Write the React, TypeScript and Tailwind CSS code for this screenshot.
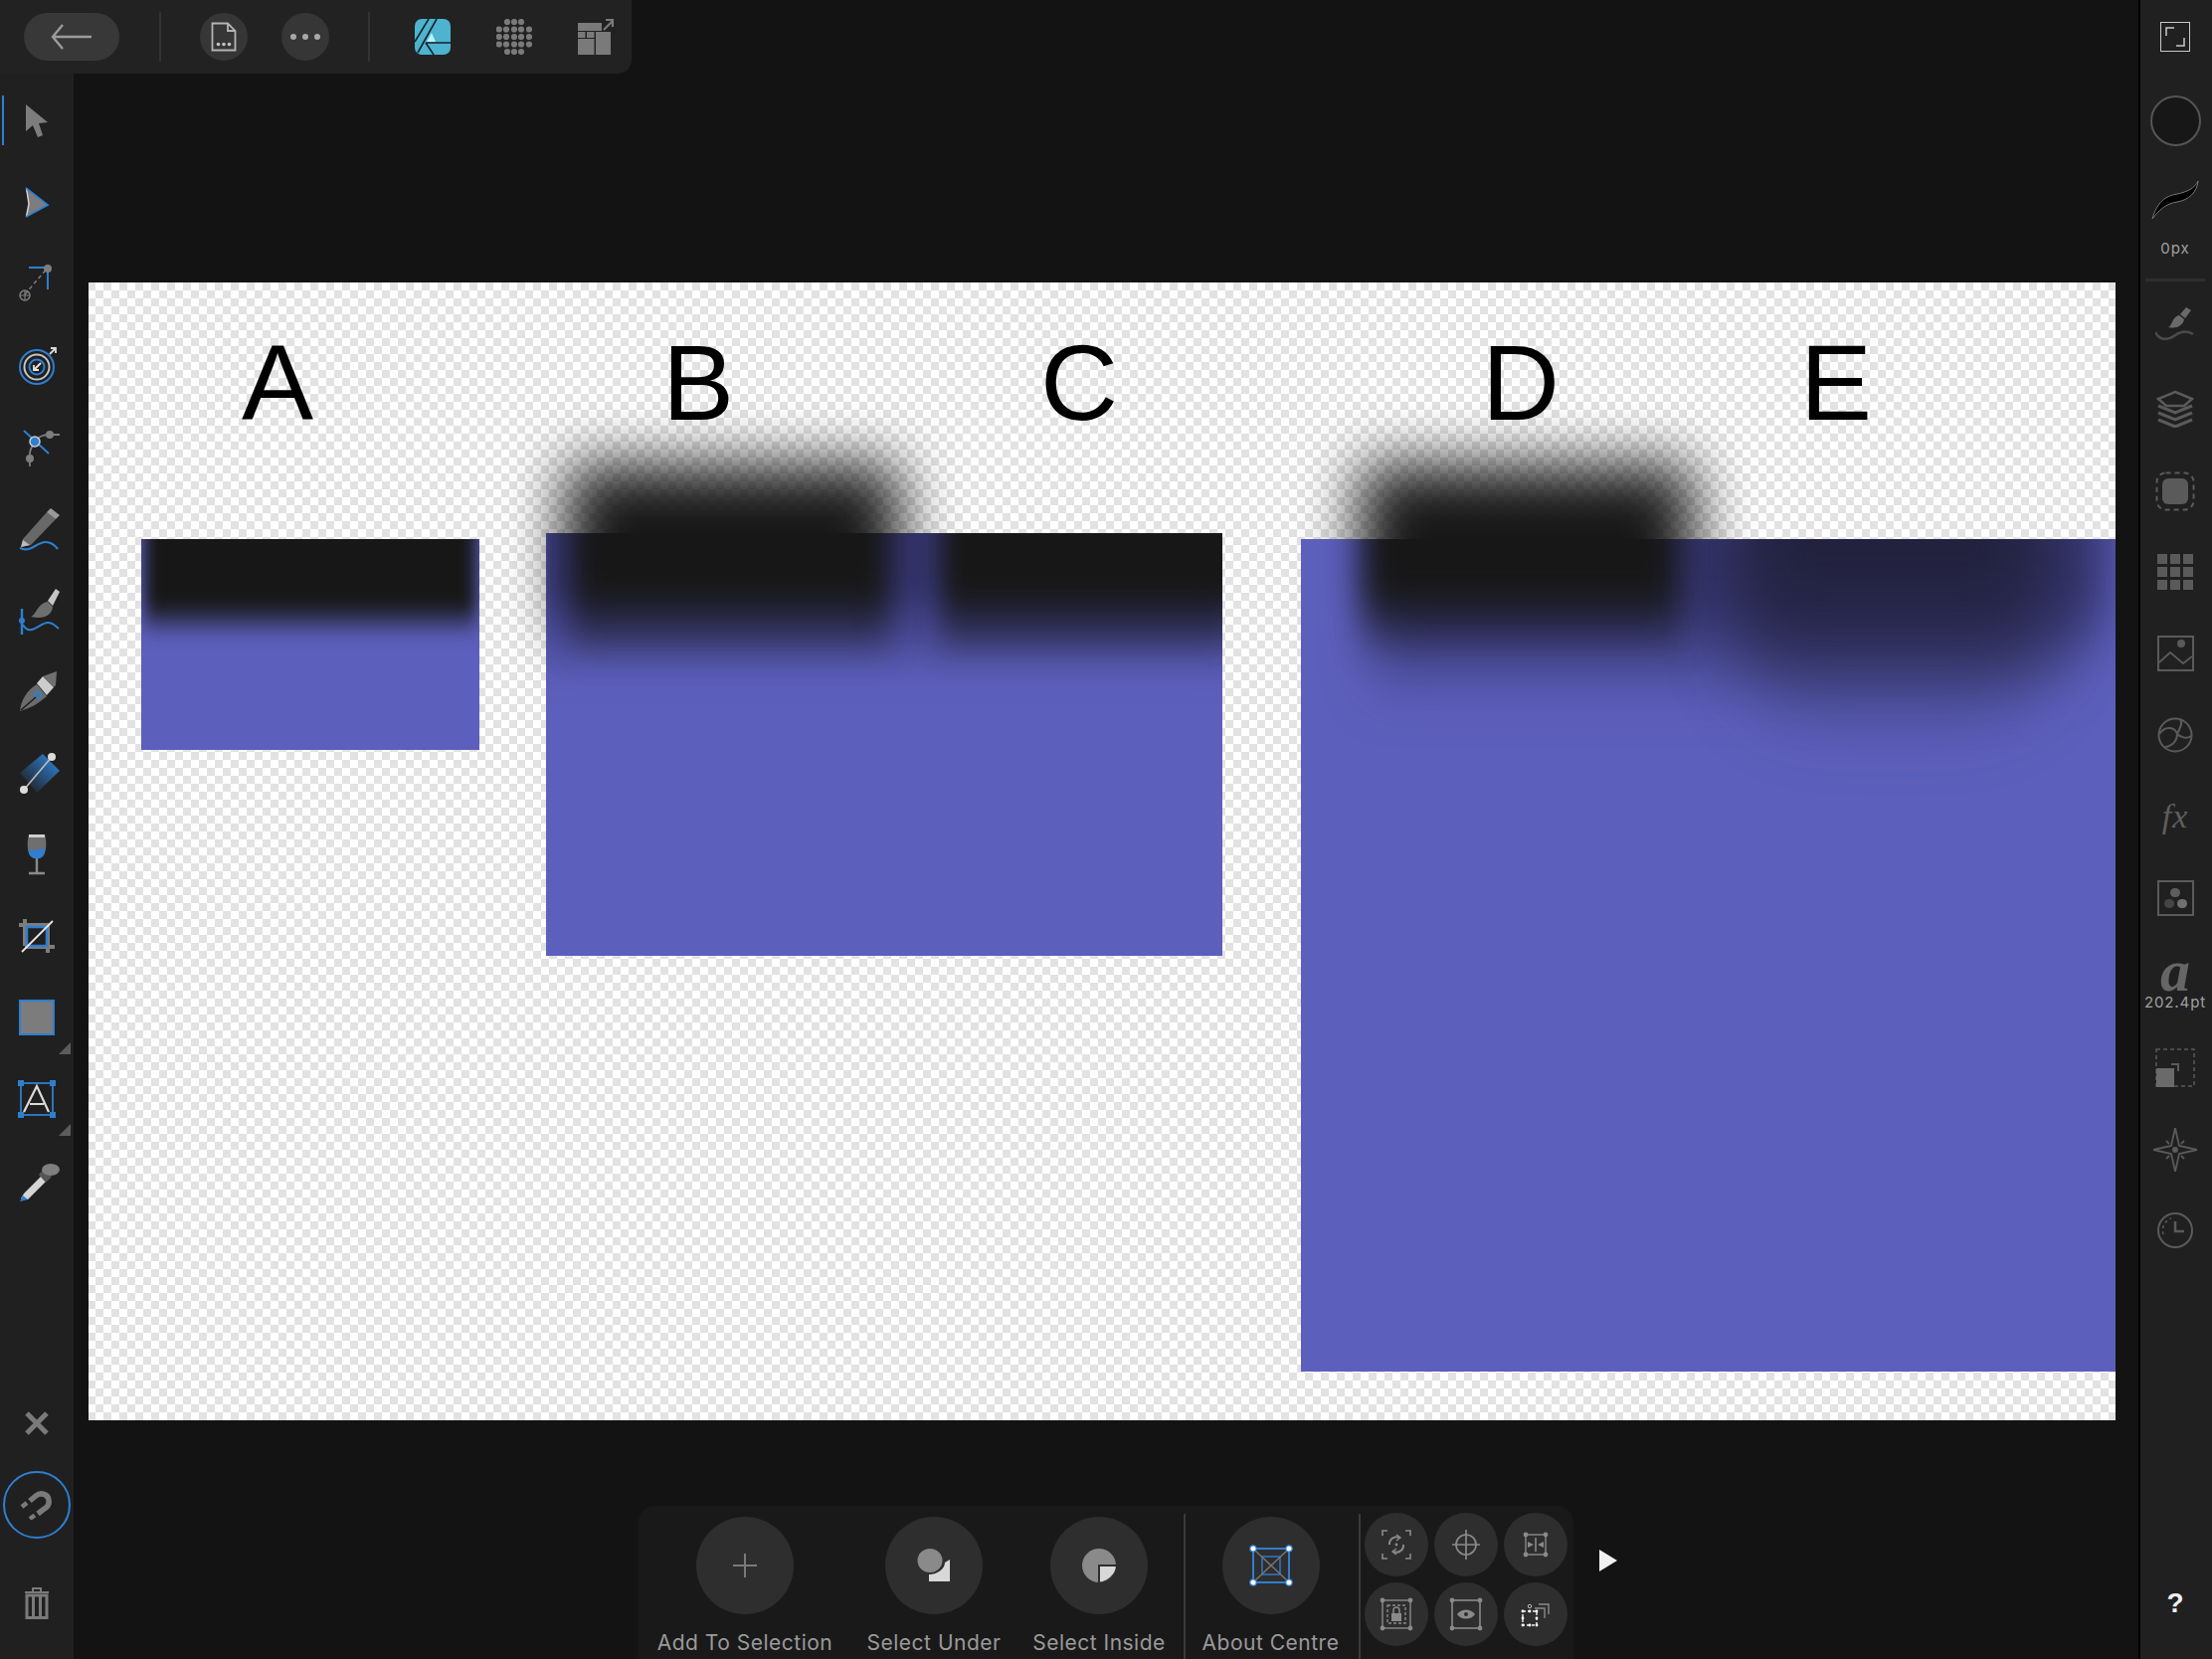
import type { ReactNode } from "react";

const grey = "#7d7d7d";
const blue = "#2f7ed0";
const rg = "#5a5a5a";
const sm = "#8a8a8a";

function Ico({ size = 54, children }: { size?: number; children: ReactNode }) {
  return (
    <svg width={size} height={size} viewBox="0 0 54 54" fill="none">
      {children}
    </svg>
  );
}

const leftTools: ReactNode[] = [
  <Ico key="move">
    <path d="M16 10 L16 37 L23 31 L28 43 L33 41 L29 29 L38 28 Z" fill={grey} />
  </Ico>,
  <Ico key="node">
    <path d="M16 12 L38 29 L16 41 L19 28 Z" fill={grey} />
    <path d="M16.5 12 L19 28 L16.5 41" stroke="#d0d0d0" strokeWidth="1.5" />
    <path d="M16 12 L38 29 L16 41" stroke={blue} strokeWidth="1.8" />
  </Ico>,
  <Ico key="contour">
    <path d="M19 10 H38 V32" stroke={blue} strokeWidth="2" />
    <path d="M15 37 L38 10" stroke={grey} strokeWidth="1.5" strokeDasharray="4 3" />
    <circle cx="38" cy="11" r="4" fill={grey} />
    <circle cx="15" cy="38" r="5" stroke={grey} strokeWidth="1.5" />
    <path d="M10 38 H20 M15 33 V43" stroke={grey} strokeWidth="1.2" />
  </Ico>,
  <Ico key="corner">
    <circle cx="27" cy="28" r="17" stroke={blue} strokeWidth="2" />
    <circle cx="27" cy="28" r="12.5" stroke="#c4c4c4" strokeWidth="2" />
    <circle cx="27" cy="28" r="7.5" stroke={blue} strokeWidth="2" />
    <path d="M24 31 L31 24 M24 26 V31 H29" stroke="#e6e6e6" strokeWidth="1.8" />
    <path d="M40 15 L46 9 M41 9 H46 V14" stroke="#d8d8d8" strokeWidth="1.8" />
  </Ico>,
  <Ico key="pen-node">
    <path d="M26 22 C28 14 36 14 45 14 H50 M26 22 C18 28 20 36 20 46" stroke={grey} strokeWidth="1.8" />
    <path d="M14 10 L39 33" stroke={blue} strokeWidth="2" />
    <circle cx="40" cy="14" r="4" fill={grey} />
    <circle cx="20" cy="38" r="4" fill={grey} />
    <circle cx="25" cy="21" r="5" fill={blue} stroke="#cfcfcf" strokeWidth="1.5" />
  </Ico>,
  <Ico key="pencil">
    <path d="M13 38 L37 11 L46 18 L21 44 L11 46 Z" fill="#686868" />
    <path d="M37 11 L41 7 L50 14 L46 18 Z" fill="#9a9a9a" />
    <path d="M11 46 L13 39 L20 44 Z" fill="#bbbbbb" />
    <path d="M10 47 C22 52 26 41 36 41 C42 41 45 44 48 48" stroke={blue} strokeWidth="2.2" />
  </Ico>,
  <Ico key="brush">
    <path d="M21 34 C26 33 28 20 38 19 L43 24 C42 33 34 37 21 34 Z" fill="#6e6e6e" />
    <path d="M38 18 L46 6 L50 9 L43 23 Z" fill="#c6c6c6" />
    <path d="M12 26 V52" stroke={blue} strokeWidth="2.4" />
    <circle cx="12" cy="38" r="3" fill={blue} />
    <path d="M13 42 C20 55 30 40 38 40 C44 40 46 44 49 46" stroke={blue} strokeWidth="2" />
  </Ico>,
  <Ico key="pen">
    <path d="M10 47 C11 36 17 26 27 20 L37 32 C28 40 20 44 10 47 Z" fill="#6c6c6c" />
    <path d="M27 19 L33 12 L44 23 L37 31 Z" fill="#cccccc" />
    <path d="M33 12 L47 7 L46 21 L44 23 Z" fill="#707070" />
    <circle cx="28" cy="31" r="3.2" stroke={blue} strokeWidth="2" />
    <path d="M11 46 L26 33" stroke="#1c1c1c" strokeWidth="1.5" />
  </Ico>,
  <Ico key="fill">
    <defs>
      <linearGradient id="fillg" x1="0.9" y1="0.1" x2="0.1" y2="0.9">
        <stop offset="0" stopColor="#2f7ed0" />
        <stop offset="1" stopColor="#2f7ed0" stopOpacity="0" />
      </linearGradient>
    </defs>
    <path d="M33 8 L50 25 L27 47 L10 27 Z" fill="url(#fillg)" />
    <path d="M14 44 L42 11" stroke="#bdbdbd" strokeWidth="1.6" />
    <circle cx="14" cy="44" r="4" fill="#dcdcdc" />
    <circle cx="42" cy="11" r="4" fill="#dcdcdc" />
  </Ico>,
  <Ico key="glass">
    <path d="M19 7 H35 C37 15 37 24 33 29 C30 32 24 32 21 29 C17 24 17 15 19 7 Z" fill="#6f6f6f" />
    <path d="M18.5 22 C23 25 30 20 35.5 22 C35 25 34 28 33 29 C30 32 24 32 21 29 C19 27 18.5 25 18.5 22 Z" fill={blue} />
    <path d="M19 7 H35 V10 H19 Z" fill="#cfcfcf" />
    <path d="M27 31 V45 M19 46 H35" stroke="#8a8a8a" strokeWidth="2.4" />
  </Ico>,
  <Ico key="crop">
    <path d="M9 16 H39 M15 10 V37 M38 16 V44 M15 38 H45" stroke={grey} strokeWidth="4" />
    <rect x="17" y="18" width="20" height="19" stroke={blue} strokeWidth="2.5" />
    <path d="M12 43 L43 12" stroke="#e8e8e8" strokeWidth="1.8" />
  </Ico>,
  <Ico key="rect">
    <rect x="10" y="10" width="34" height="34" fill="#7c7c7c" stroke={blue} strokeWidth="2" />
  </Ico>,
  <Ico key="text">
    <rect x="11" y="11" width="32" height="32" stroke={blue} strokeWidth="1.8" />
    <rect x="8" y="8" width="6" height="6" fill={blue} />
    <rect x="40" y="8" width="6" height="6" fill={blue} />
    <rect x="8" y="40" width="6" height="6" fill={blue} />
    <rect x="40" y="40" width="6" height="6" fill={blue} />
    <path d="M14 40 L27 14 L39 40 M20 32 H34" stroke="#dadada" strokeWidth="2.2" />
  </Ico>,
  <Ico key="picker">
    <path d="M11 45 L14 40 L32 22 L37 27 L18 46 Z" fill="#d5d5d5" />
    <path d="M10 48 L13 42 L18 46 Z" fill={blue} />
    <path d="M29 21 L34 15 L42 23 L36 29 Z" fill="#555" />
    <ellipse cx="41" cy="16" rx="9" ry="6" fill="#7f7f7f" />
  </Ico>,
];

function Corner() {
  return (
    <svg className="absolute right-[3px] bottom-[4px]" width="12" height="12" viewBox="0 0 12 12">
      <path d="M0 12 L12 12 L12 0 Z" fill="#5c5c5c" />
    </svg>
  );
}

function LeftToolbar() {
  return (
    <div className="flex h-full w-[74px] shrink-0 flex-col bg-[#202020] pt-[81px]">
      <div className="relative">
        <div className="absolute left-[2px] top-[15px] h-[50px] w-[2px] bg-[#2f7ed0]" />
        {leftTools.map((t, i) => (
          <div key={i} className="relative flex h-[81.9px] w-[74px] items-center justify-center">
            {t}
            {(i === 11 || i === 12) && <Corner />}
          </div>
        ))}
      </div>
      <div className="mt-auto flex flex-col items-center pb-[40px]">
        <svg width="26" height="24" viewBox="0 0 26 24">
          <path d="M3 2 L23 22 M23 2 L3 22" stroke="#7a7a7a" strokeWidth="5" />
        </svg>
        <div className="mt-[36px] flex h-[68px] w-[68px] items-center justify-center rounded-full border-2 border-[#2f7ed0]">
          <svg width="34" height="30" viewBox="0 0 34 30" fill="none">
            <path d="M10 11 L16 6 C21 2 28 4 29 10 C30 15 27 18 23 20 L18 24" stroke="#7a7a7a" strokeWidth="5.5" />
            <path d="M2 17 L7 13 M10 29 L15 25.5" stroke="#7a7a7a" strokeWidth="4.5" />
          </svg>
        </div>
        <svg className="mt-[48px]" width="26" height="33" viewBox="0 0 26 33" fill="none">
          <path d="M1 6 H25 M9 5 V2 H17 V5" stroke="#7a7a7a" strokeWidth="2" />
          <path d="M3 9 H23 V31.5 H3 Z M9.5 9 V32 M16.5 9 V32" stroke="#7a7a7a" strokeWidth="3" />
        </svg>
      </div>
    </div>
  );
}

// heights put each item's centre where the screenshot has it
function Slot({ h, children }: { h: number; children: ReactNode }) {
  return (
    <div className="flex w-full items-center justify-center" style={{ height: h }}>
      {children}
    </div>
  );
}

function RightToolbar() {
  return (
    <div className="flex h-full w-[74px] shrink-0 flex-col items-center border-l-2 border-black bg-[#202020] pr-[2px]">
      <Slot h={74}>
        <div className="flex h-[30px] w-[30px] items-center justify-center border border-[#c8c8c8]">
          <svg width="22" height="22" viewBox="0 0 22 22" fill="none">
            <path d="M2 10 V2 H10 M20 12 V20 H12" stroke="#c8c8c8" strokeWidth="1.5" />
          </svg>
        </div>
      </Slot>
      <Slot h={94}>
        <div className="h-[51px] w-[51px] rounded-full border-2 border-[#555] bg-[#171717]" />
      </Slot>
      <Slot h={66}>
        <svg width="48" height="40" viewBox="0 0 48 40">
          <path d="M1 39 C6 22 14 16 26 14 C36 12 44 8 47 1 C46 12 38 20 26 22 C14 24 8 30 1 39 Z" fill="#000" stroke="#777" strokeWidth="1" />
        </svg>
      </Slot>
      <Slot h={32}>
        <span className="text-[15px] leading-[18px] tracking-[1px] text-[#a0a0a0] [font-family:'Inter',sans-serif]">0px</span>
      </Slot>
      <Slot h={30}>
        <div className="h-[3px] w-[60px] bg-[#2e2e2e]" />
      </Slot>
      <Slot h={60}>
        <svg width="40" height="36" viewBox="0 0 40 36" fill="none">
          <path d="M13 21 C17 20 17 10 24 9 L29 13 C28 19 22 23 13 21 Z" fill="#6a6a6a" />
          <path d="M25 8 L31 1 L36 4 L30 12 Z" fill="#6a6a6a" />
          <path d="M0 26 C5 36 15 33 20 29 C26 25 32 24 38 28" stroke="#4c4c4c" strokeWidth="2.5" />
        </svg>
      </Slot>
      <Slot h={110}>
        <svg width="38" height="38" viewBox="0 0 38 38" fill="none">
          <path d="M19 2 L36 9 L28 16 H10 L2 9 Z" stroke={rg} strokeWidth="2.5" />
          <path d="M2 16 L19 23 L36 16 M2 23 L19 30 L36 23 M2 30 L19 37 L36 30" stroke={rg} strokeWidth="3" />
        </svg>
      </Slot>
      <Slot h={56}>
        <svg width="40" height="40" viewBox="0 0 40 40" fill="none">
          <rect x="1.5" y="1.5" width="37" height="37" rx="9" stroke={rg} strokeWidth="2" strokeDasharray="5 4" />
          <rect x="7" y="7" width="26" height="26" rx="6" fill={rg} />
        </svg>
      </Slot>
      <Slot h={106}>
        <div className="grid grid-cols-3 gap-[3px]">
          {Array.from({ length: 9 }).map((_, i) => (
            <div key={i} className="h-[10px] w-[10px] bg-[#5a5a5a]" />
          ))}
        </div>
      </Slot>
      <Slot h={58}>
        <svg width="37" height="36" viewBox="0 0 37 36" fill="none">
          <rect x="1" y="1" width="35" height="34" stroke={rg} strokeWidth="2" />
          <path d="M2 27 L13 17 L26 28 L35 21" stroke={rg} strokeWidth="1.8" />
          <circle cx="24" cy="8" r="4" fill={rg} />
        </svg>
      </Slot>
      <Slot h={106}>
        <svg width="36" height="36" viewBox="0 0 36 36" fill="none">
          <circle cx="18" cy="18" r="16.5" stroke={rg} strokeWidth="2" />
          <path d="M2 17 C8 8 18 10 20 17 C23 11 26 5 23 2.5 M20 17 C20 23 16 29 8 30 M20 17 C24 21 30 22 34 19" stroke={rg} strokeWidth="2" />
        </svg>
      </Slot>
      <Slot h={58}>
        <span className="text-[34px] leading-[30px] tracking-[1px] italic text-[#5e5e5e] [font-family:'Liberation_Serif',serif]">fx</span>
      </Slot>
      <Slot h={106}>
        <div className="flex h-[36px] w-[37px] flex-col items-center justify-center gap-[2px] border-2 border-[#5a5a5a]">
          <div className="h-[9px] w-[10px] rounded-full bg-[#5e5e5e]" />
          <div className="flex gap-[3px]">
            <div className="h-[9px] w-[10px] rounded-full bg-[#454545]" />
            <div className="h-[9px] w-[10px] rounded-full bg-[#707070]" />
          </div>
        </div>
      </Slot>
      <Slot h={40}>
        <span className="text-[60px] leading-[40px] font-bold italic text-[#666] [font-family:'Liberation_Serif',serif]">a</span>
      </Slot>
      <Slot h={24}>
        <span className="text-[15px] leading-[18px] tracking-[0.9px] whitespace-nowrap text-[#a0a0a0] [font-family:'Inter',sans-serif]">202.4pt</span>
      </Slot>
      <Slot h={108}>
        <svg width="40" height="40" viewBox="0 0 40 40" fill="none">
          <rect x="1" y="1" width="38" height="37" stroke={rg} strokeWidth="1.5" strokeDasharray="4 3" />
          <rect x="1" y="20" width="18" height="19" fill="#6a6a6a" />
          <path d="M16 16 H23 V23" stroke={rg} strokeWidth="2" />
        </svg>
      </Slot>
      <Slot h={56}>
        <svg width="44" height="44" viewBox="0 0 44 44" fill="none">
          <path d="M22 0 L26 18 L44 22 L26 26 L22 44 L18 26 L0 22 L18 18 Z" stroke={rg} strokeWidth="1.8" />
          <circle cx="22" cy="22" r="3" fill={rg} />
          <path d="M13 13 L16 16 M31 13 L28 16 M13 31 L16 28 M31 31 L28 28" stroke={rg} strokeWidth="1.8" />
        </svg>
      </Slot>
      <Slot h={106}>
        <svg width="36" height="36" viewBox="0 0 36 36" fill="none">
          <circle cx="18" cy="18" r="17" stroke={rg} strokeWidth="2" />
          <path d="M18 9 V19 H27" stroke={rg} strokeWidth="2.5" />
          <path d="M6 22 A13 13 0 0 1 14 6" stroke={rg} strokeWidth="1.5" strokeDasharray="3 3" />
        </svg>
      </Slot>
      <span className="mt-auto mb-[43px] text-[28px] leading-[26px] font-bold text-[#f0f0f0] [font-family:'Liberation_Sans',sans-serif]">?</span>
    </div>
  );
}

const dotRows: [number[], number][] = [
  [[11, 18, 25], 3],
  [[2.8, 10, 18, 25, 33], 10.5],
  [[2.8, 10, 18, 25, 33], 18],
  [[2.8, 10, 18, 25, 33], 25.5],
  [[11, 18, 25], 33],
];

function TopBar() {
  return (
    <div className="absolute left-0 top-0 flex h-[74px] w-[635px] items-center rounded-br-[14px] bg-[#222222] pl-[24px]">
      <div className="flex h-[48px] w-[96px] items-center justify-center rounded-full bg-[#383838]">
        <svg width="44" height="28" viewBox="0 0 44 28" fill="none">
          <path d="M13 2 L3 14 L13 26 M3 14 H42" stroke="#9c9c9c" strokeWidth="2.4" />
        </svg>
      </div>
      <div className="ml-[40px] h-[50px] w-[2px] bg-[#333333]" />
      <div className="ml-[39px] flex h-[48px] w-[48px] items-center justify-center rounded-full bg-[#363636]">
        <svg width="26" height="30" viewBox="0 0 26 30" fill="none">
          <path d="M1.5 1.5 H17 L24.5 9 V28.5 H1.5 Z M17 1.5 V9 H24.5" stroke="#b4b4b4" strokeWidth="1.8" />
          <circle cx="7.5" cy="22.5" r="1.8" fill="#c4c4c4" />
          <circle cx="13" cy="22.5" r="1.8" fill="#c4c4c4" />
          <circle cx="18.5" cy="22.5" r="1.8" fill="#c4c4c4" />
        </svg>
      </div>
      <div className="ml-[34px] flex h-[48px] w-[48px] items-center justify-center gap-[6px] rounded-full bg-[#363636]">
        <div className="h-[6px] w-[6px] rounded-full bg-[#a8a8a8]" />
        <div className="h-[6px] w-[6px] rounded-full bg-[#a8a8a8]" />
        <div className="h-[6px] w-[6px] rounded-full bg-[#a8a8a8]" />
      </div>
      <div className="ml-[39px] h-[50px] w-[2px] bg-[#333333]" />
      <svg className="ml-[45px]" width="36" height="36" viewBox="0 0 36 36" fill="none">
        <rect width="36" height="36" rx="7" fill="#4db3cf" />
        <path d="M0 23 L14 0 M3 34 L22 0 M11 24 H36 M11 24 L19 36" stroke="#10222a" strokeWidth="1.6" />
        <path d="M12 23 L17 14 L21 23 Z" fill="#b9f3fb" />
      </svg>
      <svg className="ml-[46px]" width="36" height="36" viewBox="0 0 36 36" fill="#7a7a7a">
        {dotRows.flatMap(([xs, y]) => xs.map((x) => <circle key={`${x}-${y}`} cx={x} cy={y} r="3.1" />))}
      </svg>
      <svg className="ml-[46px]" width="36" height="36" viewBox="0 0 36 36" fill="none">
        <rect y="4" width="24" height="8" fill="#7a7a7a" />
        <rect y="13" width="7.5" height="6" fill="#7a7a7a" />
        <rect x="9" y="13" width="7.5" height="6" fill="#7a7a7a" />
        <rect y="20" width="16.5" height="16" fill="#7a7a7a" />
        <rect x="18" y="13" width="15" height="23" fill="#7a7a7a" />
        <path d="M26 11 L35 2 M28 1 H35 V8" stroke="#7a7a7a" strokeWidth="2.2" />
      </svg>
    </div>
  );
}

function Letter({ x, children }: { x: number; children: string }) {
  return (
    <span
      className="absolute top-[39px] text-[108px] leading-[124px] text-black [font-family:'Liberation_Sans',sans-serif]"
      style={{ left: x }}
    >
      {children}
    </span>
  );
}

// canvas origin is 89,284 in the screenshot, everything inside is relative to it
function Canvas() {
  return (
    <div className="relative h-[1144px] w-[2038px] shrink-0 overflow-hidden bg-[conic-gradient(#e2e2e2_25%,#ffffff_0_50%,#e2e2e2_0_75%,#ffffff_0)] bg-size-[16px_16px] bg-position-[-9px_0px]">
      <Letter x={154}>A</Letter>
      <Letter x={577}>B</Letter>
      <Letter x={957}>C</Letter>
      <Letter x={1401}>D</Letter>
      <Letter x={1721}>E</Letter>

      <div className="absolute left-[480px] top-[184px] h-[170px] w-[336px] bg-[#171717] blur-[30px]" />
      <div className="absolute left-[1278px] top-[184px] h-[170px] w-[336px] bg-[#171717] blur-[30px]" />

      <div className="absolute left-[53px] top-[258px] h-[212px] w-[340px] overflow-hidden bg-[#5d5fbc]">
        <div className="absolute left-[3px] -top-[60px] h-[160px] w-[334px] bg-[linear-gradient(to_bottom,#171717_78%,transparent)] blur-[8px]" />
      </div>

      <div className="absolute left-[460px] top-[252px] h-[425px] w-[680px] overflow-hidden bg-[#5d5fbc]">
        <div className="absolute -left-[10px] -top-[40px] h-[190px] w-[700px] bg-[linear-gradient(to_bottom,#33336a_50%,transparent)] blur-[14px]" />
        <div className="absolute left-[26px] -top-[40px] h-[170px] w-[320px] bg-[linear-gradient(to_bottom,#171717_55%,transparent)] blur-[14px]" />
        <div className="absolute left-[398px] -top-[40px] h-[170px] w-[340px] bg-[linear-gradient(to_bottom,#171717_55%,transparent)] blur-[12px]" />
      </div>

      <div className="absolute left-[1219px] top-[258px] h-[837px] w-[819px] overflow-hidden bg-[#5d5fbc]">
        <div className="absolute left-[70px] -top-[40px] h-[210px] w-[740px] rounded-br-[120px] bg-[linear-gradient(to_bottom,#34346c_50%,transparent)] blur-[24px]" />
        <div className="absolute left-[62px] -top-[40px] h-[160px] w-[318px] bg-[linear-gradient(to_bottom,#171717_55%,transparent)] blur-[16px]" />
        <div className="absolute left-[440px] -top-[70px] h-[270px] w-[310px] rounded-b-[110px] bg-[linear-gradient(to_bottom,#22223e_40%,transparent)] blur-[34px]" />
      </div>
    </div>
  );
}

function BigAction({ label, width, children }: { label: string; width: number; children: ReactNode }) {
  return (
    <div className="flex shrink-0 flex-col items-center pt-[11px]" style={{ width }}>
      <div className="flex h-[98px] w-[98px] items-center justify-center rounded-full bg-[#2e2e2e]">{children}</div>
      <span className="mt-[16px] text-[21px] leading-[26px] tracking-[0.5px] whitespace-nowrap text-[#9a9a9a] [font-family:'Inter',sans-serif]">
        {label}
      </span>
    </div>
  );
}

function SmallAction({ children }: { children: ReactNode }) {
  return (
    <div className="flex h-[64px] w-[64px] items-center justify-center rounded-full bg-[#2e2e2e]">
      <svg width="36" height="36" viewBox="0 0 36 36" fill="none">
        {children}
      </svg>
    </div>
  );
}

function Handle({ x, y }: { x: number; y: number }) {
  return <circle cx={x} cy={y} r="2.4" fill={sm} />;
}

function ContextBar() {
  return (
    <div className="mt-[86px] ml-[553px] flex items-center">
      <div className="flex h-[154px] w-[940px] rounded-t-[16px] bg-[#191919] pl-[7px]">
        <BigAction label="Add To Selection" width={200}>
          <svg width="26" height="26" viewBox="0 0 26 26" fill="none">
            <path d="M13 1 V25 M1 13 H25" stroke="#7a7a7a" strokeWidth="2" />
          </svg>
        </BigAction>
        <BigAction label="Select Under" width={180}>
          <svg width="36" height="36" viewBox="0 0 36 36">
            <path d="M34 12 V34 H13 V27 C22 27 29 21 29 15 Z" fill="#d8d8d8" />
            <ellipse cx="14" cy="13" rx="12.5" ry="12" fill="#8a8a8a" />
          </svg>
        </BigAction>
        <BigAction label="Select Inside" width={152}>
          <svg width="34" height="34" viewBox="0 0 34 34">
            <circle cx="17" cy="17" r="17" fill="#8a8a8a" />
            <path d="M16 16 H34 A17 17 0 0 1 16 34 Z" fill="#2e2e2e" />
            <path d="M18 18 H33.8 C33.5 25 27 32 18 33.6 Z" fill="#d8d8d8" />
          </svg>
        </BigAction>
        <div className="ml-[9px] mt-[8px] h-[146px] w-[2px] shrink-0 bg-[#3a3a3a]" />
        <BigAction label="About Centre" width={171}>
          <svg width="44" height="42" viewBox="0 0 44 42" fill="none">
            <rect x="4" y="4" width="36" height="34" stroke={blue} strokeWidth="2" />
            <rect x="13" y="12" width="18" height="18" stroke={blue} strokeWidth="1.4" />
            <path d="M6 6 L38 36 M38 6 L6 36" stroke="#777" strokeWidth="1.4" />
            {[[4, 4], [40, 4], [4, 38], [40, 38]].map(([x, y]) => (
              <circle key={`${x}${y}`} cx={x} cy={y} r="3.2" fill="#fff" stroke={blue} strokeWidth="1.2" />
            ))}
          </svg>
        </BigAction>
        <div className="ml-[3px] mt-[8px] h-[146px] w-[2px] shrink-0 bg-[#3a3a3a]" />
        <div className="ml-[4px] mt-[7px] grid h-[134px] grid-cols-3 gap-[6px]">
          <SmallAction>
            <path d="M4 9 V4 H9 M27 4 H32 V9 M4 27 V32 H9 M27 32 H32 V27" stroke={sm} strokeWidth="1.6" />
            <path d="M11 18 A7 7 0 0 1 21 11 M25 18 A7 7 0 0 1 15 25" stroke={sm} strokeWidth="2" />
            <path d="M18 8 L22 11 L18 14 M18 22 L14 25 L18 28" stroke={sm} strokeWidth="1.4" />
            <circle cx="18" cy="18" r="1.4" fill={sm} />
          </SmallAction>
          <SmallAction>
            <circle cx="18" cy="18" r="10" stroke={sm} strokeWidth="1.7" />
            <path d="M18 3 V33 M4 18 H32" stroke={sm} strokeWidth="1.7" />
          </SmallAction>
          <SmallAction>
            <rect x="8" y="8" width="20" height="20" stroke={sm} strokeWidth="1.4" />
            <Handle x={8} y={8} />
            <Handle x={28} y={8} />
            <Handle x={8} y={28} />
            <Handle x={28} y={28} />
            <path d="M18 11 V25" stroke={sm} strokeWidth="1.6" />
            <path d="M10 15 L16 18 L10 21 Z M26 15 L20 18 L26 21 Z" fill={sm} />
          </SmallAction>
          <SmallAction>
            <rect x="4" y="4" width="28" height="28" stroke={sm} strokeWidth="1.4" />
            <rect x="9" y="9" width="18" height="18" stroke={sm} strokeWidth="1.4" strokeDasharray="3 2" />
            <Handle x={4} y={4} />
            <Handle x={32} y={4} />
            <Handle x={4} y={32} />
            <Handle x={32} y={32} />
            <rect x="13" y="17" width="10" height="8" fill={sm} />
            <path d="M15 17 V14 A3 3 0 0 1 21 14 V17" stroke={sm} strokeWidth="1.5" />
          </SmallAction>
          <SmallAction>
            <rect x="4" y="4" width="28" height="28" stroke={sm} strokeWidth="1.6" />
            <Handle x={4} y={4} />
            <Handle x={32} y={4} />
            <Handle x={4} y={32} />
            <Handle x={32} y={32} />
            <path d="M9 18 C13 12 23 12 27 18 C23 24 13 24 9 18 Z" fill={sm} />
            <circle cx="18" cy="18" r="2" fill="#2e2e2e" />
          </SmallAction>
          <SmallAction>
            <path d="M21 8 H31 V18 M17 12 H27 V22" stroke={sm} strokeWidth="1.4" />
            <rect x="5" y="15" width="14" height="14" stroke="#f0f0f0" strokeWidth="1.4" strokeDasharray="3 2" />
            <circle cx="12" cy="10" r="1.7" stroke="#c0c0c0" strokeWidth="1" />
            {[[5, 15], [12, 15], [19, 15], [5, 22], [19, 22], [5, 29], [12, 29], [19, 29]].map(([x, y]) => (
              <circle key={`${x}-${y}`} cx={x} cy={y} r="1.4" fill="#ffffff" />
            ))}
          </SmallAction>
        </div>
      </div>
      <svg className="ml-[26px] -mt-[44px]" width="18" height="22" viewBox="0 0 18 22">
        <path d="M0 0 L18 11 L0 22 Z" fill="#f0f0f0" />
      </svg>
    </div>
  );
}

export default function App() {
  return (
    <div className="relative flex h-[1668px] w-[2224px] overflow-hidden bg-[#131313]">
      <LeftToolbar />
      <div className="flex min-w-0 flex-1 flex-col pl-[15px] pt-[284px]">
        <Canvas />
        <ContextBar />
      </div>
      <RightToolbar />
      <TopBar />
    </div>
  );
}
